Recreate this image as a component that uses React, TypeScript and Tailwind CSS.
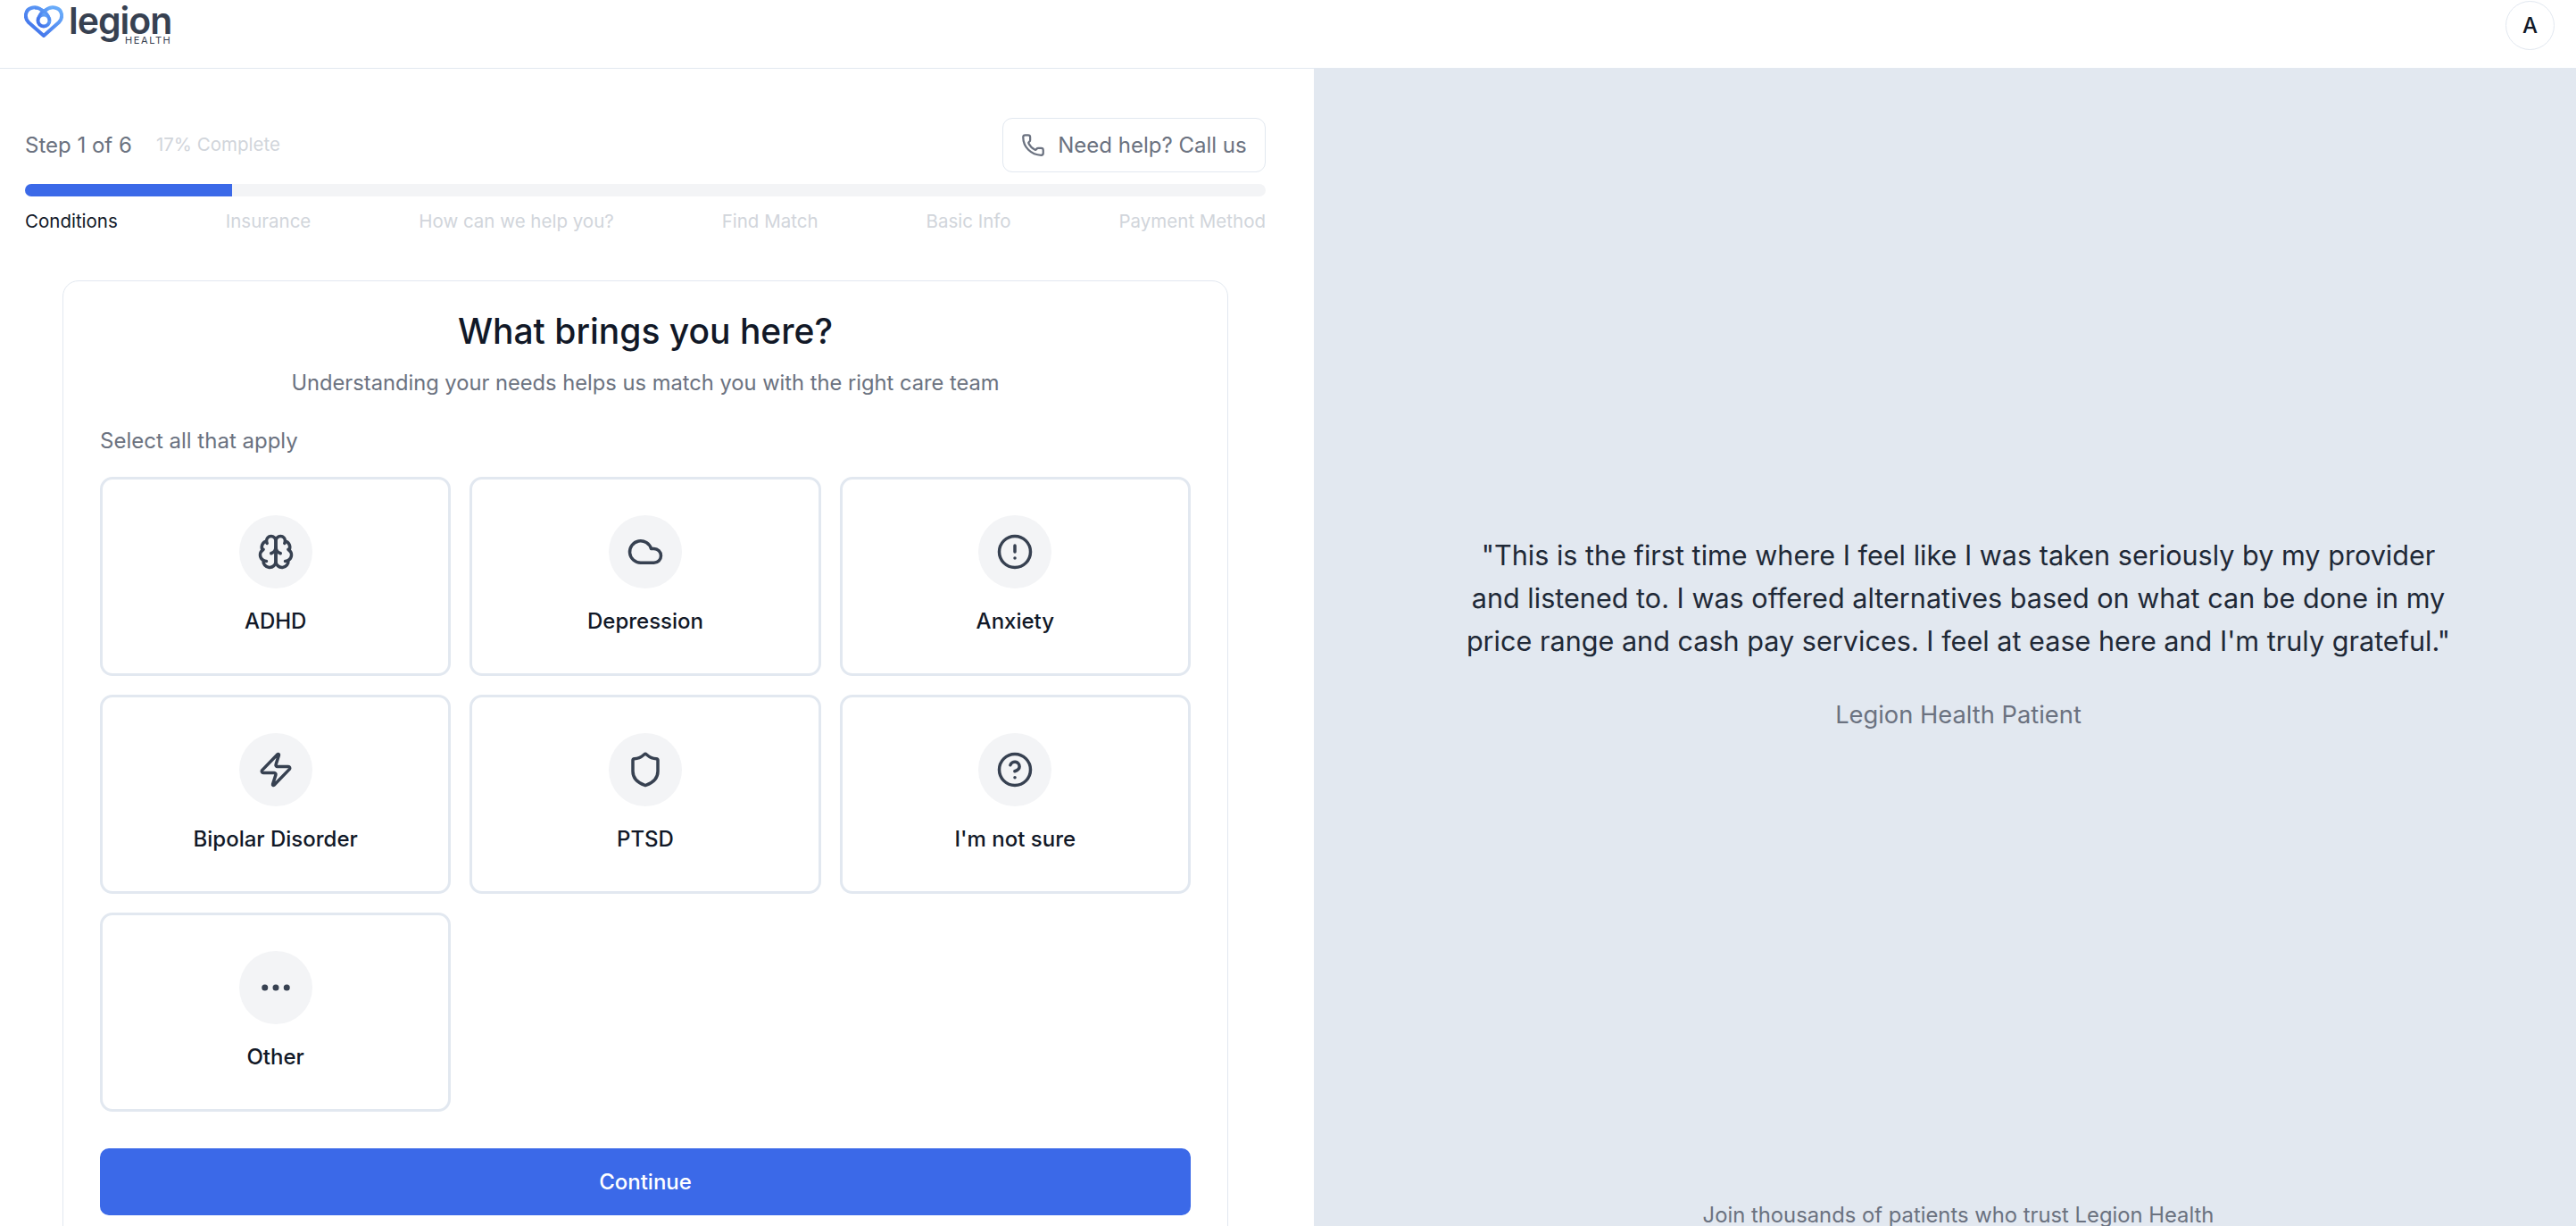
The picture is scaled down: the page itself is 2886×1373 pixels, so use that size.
import { Cloud, CircleAlert, Zap, Shield, CircleHelp, Ellipsis, Phone } from "lucide-react";

const steps = ["Conditions", "Insurance", "How can we help you?", "Find Match", "Basic Info", "Payment Method"];

// older lucide brain, the one with the little arrow in the middle
function BrainIcon({ size }: { size: number }) {
  return (
    <svg width={size} height={size} viewBox="0 0 24 24" fill="none" stroke="currentColor" strokeWidth="2" strokeLinecap="round" strokeLinejoin="round">
      <path d="M12 5a3 3 0 1 0-5.997.125 4 4 0 0 0-2.526 5.77 4 4 0 0 0 .556 6.588A4 4 0 1 0 12 18Z" />
      <path d="M12 5a3 3 0 1 1 5.997.125 4 4 0 0 1 2.526 5.77 4 4 0 0 1-.556 6.588A4 4 0 1 1 12 18Z" />
      <path d="M15 13a4.5 4.5 0 0 1-3-4 4.5 4.5 0 0 1-3 4" />
      <path d="M17.599 6.5a3 3 0 0 0 .399-1.375" />
      <path d="M6.003 5.125A3 3 0 0 0 6.401 6.5" />
      <path d="M3.477 10.896a4 4 0 0 1 .585-.396" />
      <path d="M19.938 10.5a4 4 0 0 1 .585.396" />
      <path d="M6 18a4 4 0 0 1-1.967-.516" />
      <path d="M19.967 17.484A4 4 0 0 1 18 18" />
    </svg>
  );
}

const conditions = [
  { label: "ADHD", Icon: BrainIcon },
  { label: "Depression", Icon: Cloud },
  { label: "Anxiety", Icon: CircleAlert },
  { label: "Bipolar Disorder", Icon: Zap },
  { label: "PTSD", Icon: Shield },
  { label: "I'm not sure", Icon: CircleHelp },
  { label: "Other", Icon: Ellipsis },
];

function Logo() {
  return (
    <div className="flex items-start gap-[6px]">
      <svg width="44" height="37" viewBox="0 0 44 37" fill="none" className="mt-[6px] -ml-[1px]">
        <defs>
          <linearGradient id="heart" x1="0" y1="1" x2="1" y2="0">
            <stop offset="0" stopColor="#3b69e8" />
            <stop offset="1" stopColor="#6cb0fb" />
          </linearGradient>
        </defs>
        <path
          d="M22 34 L5 19 C0 14 1 5 8 3 C14 1 19 4 22 8 C25 4 30 1 36 3 C43 5 44 14 39 19 Z"
          stroke="url(#heart)"
          strokeWidth="4"
          strokeLinejoin="round"
        />
        <circle cx="22" cy="17" r="6.5" stroke="url(#heart)" strokeWidth="4" />
        <path d="M12 3 C19 3 28 8 28.5 17 M32 2.5 C25 3 16 8 15.5 17" stroke="url(#heart)" strokeWidth="3" />
      </svg>
      <div className="flex flex-col items-end text-[#374151]">
        <span className="mt-[5px] text-[41px] leading-[36px] font-semibold tracking-[-1px]">legion</span>
        <span className="text-[11px] leading-[9px] tracking-[1.6px]">HEALTH</span>
      </div>
    </div>
  );
}

export default function App() {
  return (
    <div className="h-screen overflow-hidden bg-white font-['Inter',sans-serif] flex flex-col">
      <header className="h-[77px] shrink-0 flex items-start justify-between border-b border-[#e2e8f0] pl-[28px] pr-[24px]">
        <Logo />
        <div className="mt-[1px] w-[55px] h-[55px] rounded-full border border-[#e2e8f0] flex items-center justify-center text-[24px] font-medium text-[#111827]">
          A
        </div>
      </header>

      <div className="flex flex-1 min-h-0">
        <main className="w-[1472px] shrink-0 pl-[28px] pr-[54px] pt-[55px]">
          <div className="flex items-center justify-between">
            <div className="flex items-center gap-[27px]">
              <span className="text-[24px] text-[#6b7280]">Step 1 of 6</span>
              <span className="text-[20.5px] text-[#d1d5db]">17% Complete</span>
            </div>
            <button className="h-[61px] w-[295px] rounded-[11px] border border-[#e2e8f0] flex items-center justify-center gap-[14px] text-[24px] text-[#6b7280]">
              <Phone size={27} strokeWidth={2} />
              Need help? Call us
            </button>
          </div>

          <div className="mt-[13px] h-[14px] rounded-full bg-[#f3f4f6] overflow-hidden">
            <div className="h-full w-[16.7%] bg-[#3b69e8]" />
          </div>

          <div className="mt-[13px] flex justify-between text-[20.5px] text-[#d1d5db]">
            {steps.map((step, i) => (
              <span key={step} className={i === 0 ? "text-[#111827]" : ""}>
                {step}
              </span>
            ))}
          </div>

          <section className="mt-[50px] mx-[42px] rounded-[18px] border border-[#e2e8f0] px-[41px] pt-[28px]">
            <h1 className="text-center text-[39px] leading-[56px] font-medium text-[#111827]">What brings you here?</h1>
            <p className="mt-[12px] text-center text-[23.7px] text-[#6b7280]">
              Understanding your needs helps us match you with the right care team
            </p>
            <p className="mt-[30px] text-[24px] text-[#6b7280]">Select all that apply</p>

            <div className="mt-[22px] grid grid-cols-3 gap-[21px]">
              {conditions.map(({ label, Icon }) => (
                <button
                  key={label}
                  className="h-[223px] rounded-[14px] border-[3px] border-[#e2e8f0] flex flex-col items-center pt-[40px]"
                >
                  <span className="w-[82px] h-[82px] rounded-full bg-[#f3f4f6] flex items-center justify-center text-[#374151]">
                    <Icon size={42} />
                  </span>
                  <span className="mt-[19px] text-[24px] font-medium text-[#111827]">{label}</span>
                </button>
              ))}
            </div>

            <button className="mt-[41px] mb-[40px] w-full h-[75px] rounded-[10px] bg-[#3b69e8] text-[24px] font-medium text-white">
              Continue
            </button>
          </section>
        </main>

        <aside className="flex-1 min-w-0 bg-[#e2e8f0] flex flex-col items-center pl-[30px]">
          <div className="mt-[521px] w-[1120px] text-center">
            <p className="text-[30.6px] leading-[48px] text-[#1f2937]">
              "This is the first time where I feel like I was taken seriously by my provider and listened to. I was offered alternatives based on what can be done in my price range and cash pay services. I feel at ease here and I'm truly grateful."
            </p>
            <p className="mt-[39px] text-[27.3px] text-[#6b7280]">Legion Health Patient</p>
          </div>
          <p className="mt-auto -mb-[2px] text-[23.8px] leading-[28px] text-[#6b7280]">
            Join thousands of patients who trust Legion Health
          </p>
        </aside>
      </div>
    </div>
  );
}
